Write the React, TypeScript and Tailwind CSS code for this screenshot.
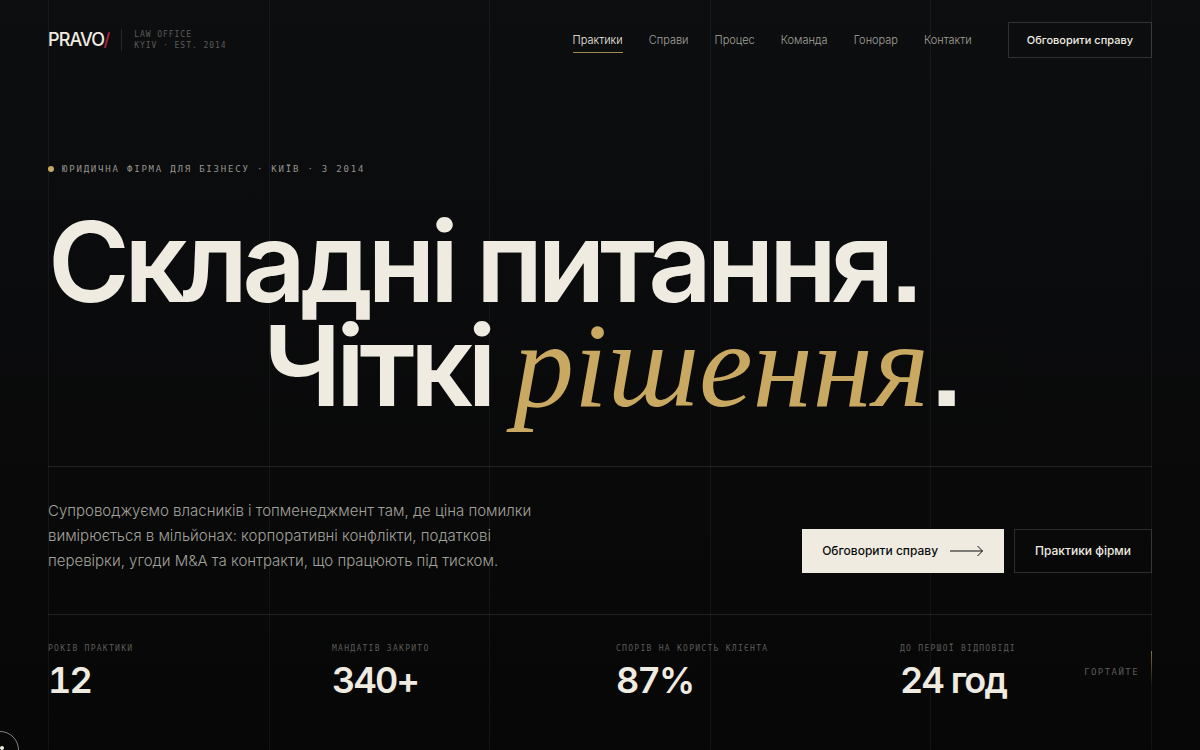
const navItems = [
  { label: 'Практики', href: '#practices', active: true },
  { label: 'Справи', href: '#cases' },
  { label: 'Процес', href: '#process' },
  { label: 'Команда', href: '#team' },
  { label: 'Гонорар', href: '#fees' },
  { label: 'Контакти', href: '#contacts' },
];

const stats = [
  { label: 'Років практики', value: '12' },
  { label: 'Мандатів закрито', value: '340+' },
  { label: 'Спорів на користь клієнта', value: '87%' },
  { label: 'До першої відповіді', value: '24 год' },
];

function GridLines() {
  return (
    <div
      aria-hidden="true"
      className="pointer-events-none absolute inset-y-0 inset-x-12 grid grid-cols-5 border-r border-white/5"
    >
      {[0, 1, 2, 3, 4].map((column) => (
        <div key={column} className="border-l border-white/5" />
      ))}
    </div>
  );
}

function Header() {
  return (
    <header className="flex items-center justify-between py-[22px]">
      <a href="#top" className="flex items-center gap-3">
        <span className="text-lg leading-6 font-medium tracking-tighter">
          PRAVO<span className="text-[#a8284a]">/</span>
        </span>
        <span className="border-l border-white/10 pl-3 font-['DejaVu_Sans_Mono',monospace] text-[8px] leading-[11px] tracking-[0.12em] text-[#5c5b58] uppercase">
          Law office
          <br />
          Kyiv · Est. 2014
        </span>
      </a>

      <div className="flex items-center gap-9">
        <nav className="flex items-center gap-[26px] text-[11px] leading-4 font-light">
          {navItems.map((item) => (
            <a
              key={item.label}
              href={item.href}
              className={
                item.active
                  ? 'border-b border-[#c9a961]/80 py-1 text-[#efebe1]'
                  : 'border-b border-transparent py-1 text-[#a3a19b]'
              }
            >
              {item.label}
            </a>
          ))}
        </nav>
        <button
          type="button"
          className="h-9 border border-white/15 px-[18px] text-[11px] leading-4 font-medium"
        >
          Обговорити справу
        </button>
      </div>
    </header>
  );
}

function Hero() {
  return (
    <section className="pt-[81px]">
      <p className="flex items-center gap-2 font-['DejaVu_Sans_Mono',monospace] text-[9px] leading-4 tracking-[0.2em] text-[#96948e] uppercase">
        <span className="h-1.5 w-1.5 rounded-full bg-[#c9a961]" />
        Юридична фірма для бізнесу · Київ · з 2014
      </p>
      {/* ss07 gives Inter square punctuation */}
      <h1 className="mt-[33px] text-[111px] leading-[104px] font-semibold tracking-tighter whitespace-nowrap [font-feature-settings:'ss07']">
        <span className="block">Складні питання.</span>
        <span className="block pl-[19.5%]">
          Чіткі{' '}
          <em className="font-['Liberation_Serif',serif] text-[121px] leading-20 font-normal tracking-normal text-[#c9a961]">
            рішення
          </em>
          .
        </span>
      </h1>
    </section>
  );
}

function Intro() {
  return (
    <section className="mt-12 flex items-end justify-between border-t border-white/10 pt-[31px] pb-[41px]">
      <p className="max-w-[500px] text-[15px] leading-[25px] font-light text-[#a3a19b]">
        Супроводжуємо власників і топменеджмент там, де ціна помилки вимірюється
        в мільйонах: корпоративні конфлікти, податкові перевірки, угоди M&amp;A
        та контракти, що працюють під тиском.
      </p>
      <div className="flex gap-2.5 text-xs font-medium">
        <button
          type="button"
          className="flex h-11 items-center gap-3 bg-[#efebe1] px-5 text-[#0b0c0d]"
        >
          Обговорити справу
          <svg width="34" height="12" viewBox="0 0 34 12" fill="none" stroke="currentColor">
            <path d="M0 6h32.5M27.5 1l5 5-5 5" />
          </svg>
        </button>
        <button type="button" className="h-11 border border-white/15 px-5">
          Практики фірми
        </button>
      </div>
    </section>
  );
}

function Stats() {
  return (
    <section className="relative border-t border-white/10 pt-7">
      <dl className="grid grid-cols-4 gap-8">
        {stats.map((stat) => (
          <div key={stat.label}>
            <dt className="font-['DejaVu_Sans_Mono',monospace] text-[8px] leading-3 tracking-[0.16em] whitespace-nowrap text-[#5c5b58] uppercase">
              {stat.label}
            </dt>
            <dd className="mt-1 text-4xl leading-[42px] font-semibold tracking-tighter tabular-nums">
              {stat.value}
            </dd>
          </div>
        ))}
      </dl>
      <a
        href="#practices"
        className="absolute top-9 right-0 flex items-center gap-3 font-['DejaVu_Sans_Mono',monospace] text-[9px] tracking-[0.16em] text-[#5c5b58] uppercase"
      >
        Гортайте
        <span className="h-11 w-px bg-linear-to-b from-[#c9a961]/60 to-transparent to-80%" />
      </a>
    </section>
  );
}

function Cursor() {
  return (
    <div aria-hidden="true" className="pointer-events-none">
      <span className="fixed -bottom-[19px] -left-[19px] size-[38px] rounded-full border border-white/50" />
      <span className="fixed bottom-0 left-0 size-1 rounded-full bg-[#efebe1]" />
    </div>
  );
}

export default function App() {
  return (
    <div
      id="top"
      className="relative min-h-screen overflow-hidden bg-linear-to-b from-[#0d0e10] to-[#070707] px-12 font-[Inter,sans-serif] text-[#efebe1]"
    >
      <GridLines />
      <div className="relative">
        <Header />
        <main>
          <Hero />
          <Intro />
          <Stats />
        </main>
      </div>
      <Cursor />
    </div>
  );
}
